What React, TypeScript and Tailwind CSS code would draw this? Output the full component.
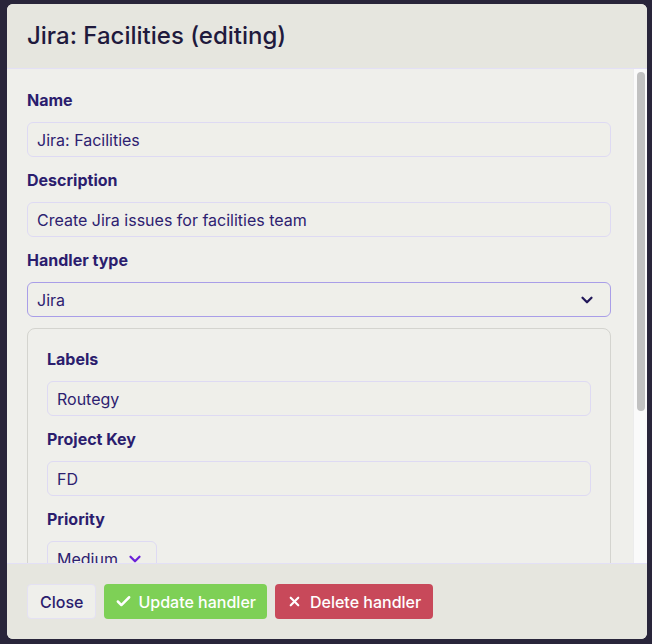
import React from "react";
import { Check, ChevronDown, X } from "lucide-react";

type FieldProps = {
  label: string;
  value: string;
};

function Field({ label, value }: FieldProps) {
  return (
    <div className="flex flex-col">
      <label className="text-base font-bold leading-6 text-[#2b1d6e]">{label}</label>
      <div className="mt-2.5 flex h-[35px] items-center rounded-md border border-[#dedaf3] bg-[#efefea] pl-[9px] text-base text-[#2d2170]">
        {value}
      </div>
    </div>
  );
}

export default function App() {
  return (
    <div
      className="h-[644px] w-[652px] overflow-hidden bg-[#29253a] pl-[7px] pt-1"
      style={{ fontFamily: "Inter, 'Liberation Sans', sans-serif" }}
    >
      <div className="flex h-[635px] w-[640px] flex-col overflow-hidden rounded-md bg-[#efefeb]">
        {/* header */}
        <div className="flex h-[65px] shrink-0 items-center border-b border-[#e3e0f6] bg-[#e6e6df] px-5">
          <h2 className="text-2xl font-medium text-[#1f1a3d]">Jira: Facilities (editing)</h2>
        </div>

        {/* body */}
        <div className="flex min-h-0 flex-1">
          <div className="flex min-w-0 flex-1 flex-col gap-[11px] overflow-hidden pl-5 pr-[22px] pt-[19px]">
            <Field label="Name" value="Jira: Facilities" />
            <Field label="Description" value="Create Jira issues for facilities team" />
            <div className="flex flex-col">
              <label className="text-base font-bold leading-6 text-[#2b1d6e]">Handler type</label>
              <div className="mt-2.5 flex h-[35px] items-center justify-between rounded-md border border-[#a99ee8] bg-[#efefea] pl-[9px] pr-[14px] text-base text-[#2d2170]">
                <span>Jira</span>
                <ChevronDown size={18} strokeWidth={3} className="text-[#22185a]" />
              </div>
            </div>
            <div className="flex shrink-0 flex-col gap-[11px] rounded-lg border border-[#d4d4cf] px-[19px] pb-5 pt-[18px]">
              <Field label="Labels" value="Routegy" />
              <Field label="Project Key" value="FD" />
              <div className="flex flex-col">
                <label className="text-base font-bold leading-6 text-[#2b1d6e]">Priority</label>
                <div className="mt-2.5 flex h-[35px] w-[110px] items-center gap-2 rounded-md border border-[#dedaf3] bg-[#efefea] pl-[9px] text-base text-[#2d2170]">
                  <span>Medium</span>
                  <ChevronDown size={18} strokeWidth={3} className="text-[#6b21d8]" />
                </div>
              </div>
            </div>
          </div>
          <div className="w-[14px] shrink-0 border-l border-[#ececec] bg-[#fafafa] pt-[3px]">
            <div className="mx-auto h-[339px] w-2 rounded-full bg-[#c1c1c1]" />
          </div>
        </div>

        {/* footer */}
        <div className="flex h-[76px] shrink-0 items-center gap-2 border-t border-[#e3e0f6] bg-[#e6e6df] px-5">
          <button className="h-[35px] rounded border border-[#e4e1f3] bg-[#efefeb] px-3 text-base font-medium text-[#2b1d6e]">
            Close
          </button>
          <button className="flex h-[35px] items-center gap-1.5 rounded bg-[#7ed056] px-[11px] text-base font-medium text-white">
            <Check size={17} strokeWidth={3.5} />
            Update handler
          </button>
          <button className="flex h-[35px] items-center gap-2 rounded bg-[#c8495a] px-3 text-base font-medium text-white">
            <X size={15} strokeWidth={3.5} />
            Delete handler
          </button>
        </div>
      </div>
    </div>
  );
}
